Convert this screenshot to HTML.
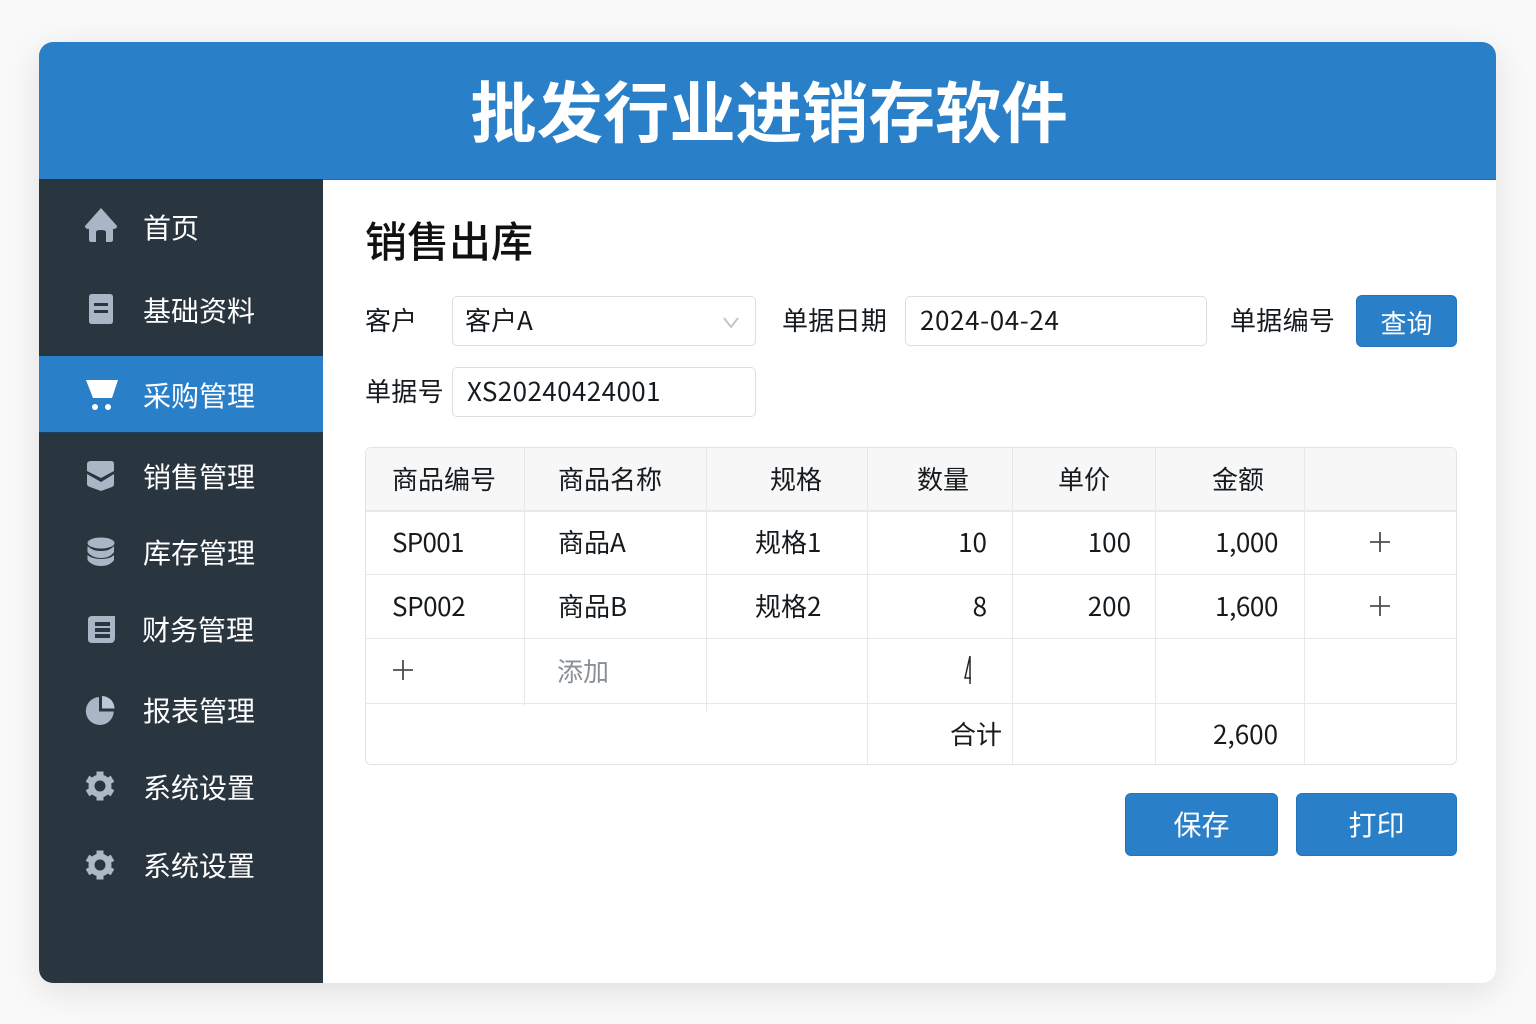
<!DOCTYPE html>
<html lang="zh-CN"><head><meta charset="utf-8"><title>批发行业进销存软件</title>
<style>
*{box-sizing:border-box;margin:0;padding:0}
html,body{width:1536px;height:1024px;overflow:hidden;background:#f9f9f9;font-family:"Liberation Sans","Noto Sans CJK SC",sans-serif}
body{position:relative}
.t{position:absolute;white-space:nowrap;font-family:"Noto Sans CJK SC",sans-serif;color:#151a1e;line-height:40px;height:40px}
.r{text-align:right}.c{text-align:center}
#card{position:absolute;left:39px;top:42px;width:1457px;height:941px;border-radius:14px;background:#fff;box-shadow:0 8px 34px rgba(0,0,0,.10);overflow:hidden}
#hd{position:absolute;left:0;top:0;width:1457px;height:138px;background:#2a7fc9;border-bottom:1px solid #1f6cb0}
#sb{position:absolute;left:0;top:137px;width:284px;height:804px;background:#29353f}
#ac{position:absolute;left:0;top:314px;width:284px;height:77px;background:#2a7fc9;border-bottom:1px solid #1c3f5f}
.n{font-size:28px;color:#fff;left:143px}
.box{position:absolute;background:#fff;border:1px solid #dcdfe2;border-radius:5px}
.btn{position:absolute;background:#2a7fc9;border:1px solid #2474bb;border-radius:6px}
.l{position:absolute;background:#e6e8ea}
svg{position:absolute;overflow:visible}
.f{font-size:26px}
</style></head><body>
<div id="card"><div id="hd"></div><div id="sb"></div><div id="ac"></div></div>

<div class="t" style="left:0;width:1538px;top:69px;height:80px;line-height:80px;font-size:66.400px;font-weight:700;color:#fff;text-align:center">批发行业进销存软件</div>

<svg style="left:0;top:0" width="1536" height="1024" viewBox="0 0 1536 1024">
<g fill="#a9b6c5">
<path d="M101 208 L117 226 Q117 229 113 229 L113 240 Q113 242 110 242 L106 242 L106 232 Q106 230 101 230 Q96 230 96 232 L96 242 L92 242 Q89 242 89 240 L89 229 Q85 229 85 226 Z"/>
<path fill-rule="evenodd" d="M92 294 H110 Q113 294 113 297 V321 Q113 324 110 324 H92 Q89 324 89 321 V297 Q89 294 92 294 Z M94 303 V306 H108 V303 Z M94 310 V313 H108 V310 Z"/>
<path d="M91 461 H111 Q114 461 114 464 V471 L101 478 L87 471 V464 Q87 461 91 461 Z"/>
<path d="M87 474 L101 482 L114 474 V484 Q114 486 112 487 L101 491 L90 487 Q87 486 87 484 Z"/>
<ellipse cx="101" cy="543" rx="13.500" ry="5.500"/>
<path d="M87.500 546 Q92 551 101 551 Q110 551 114 546 V552 Q110 558 101 558 Q92 558 87.500 552 Z"/>
<path d="M87.500 555 Q92 559 101 559 Q110 559 114 555 V560 Q110 566 101 566 Q92 566 87.500 560 Z"/>
<path fill-rule="evenodd" d="M92 616 H115 V638 Q115 643 110 643 H92 Q88 643 88 639 V620 Q88 616 92 616 Z M95 622 V626 H110 V622 Z M95 628 V632 H110 V628 Z M95 634 V638 H110 V634 Z"/>
<path d="M99 697 V711.500 H113.800 A14 14 0 1 1 99 697 Z"/>
<path d="M102 696 A12.500 12.500 0 0 1 114.500 708.500 H102 Z" fill="#bcc8d6"/>
</g>
<path d="M86 380 H118 L112 398 H93 Z" fill="#fff"/><circle cx="95" cy="407" r="3" fill="#fff"/><circle cx="108" cy="407" r="3" fill="#fff"/>
<g fill="none" stroke="#aeb9c6">
<circle cx="100" cy="786" r="8.500" stroke-width="6"/>
<path stroke-width="7" d="M100 771.500 V777 M100 795 V800.500 M87.500 778.750 L92.200 781.500 M107.800 790.500 L112.500 793.250 M87.500 793.250 L92.200 790.500 M107.800 781.500 L112.500 778.750"/>
<circle cx="100" cy="865" r="8.500" stroke-width="6"/>
<path stroke-width="7" d="M100 850.500 V856 M100 874 V879.500 M87.500 857.750 L92.200 860.500 M107.800 869.500 L112.500 872.250 M87.500 872.250 L92.200 869.500 M107.800 860.500 L112.500 857.750"/>
</g>
</svg>

<div class="t n" style="top:207px">首页</div>
<div class="t n" style="top:290px">基础资料</div>
<div class="t n" style="top:375px">采购管理</div>
<div class="t n" style="top:456px">销售管理</div>
<div class="t n" style="top:532px">库存管理</div>
<div class="t n" style="top:609px;left:142px">财务管理</div>
<div class="t n" style="top:690px">报表管理</div>
<div class="t n" style="top:767px">系统设置</div>
<div class="t n" style="top:845px">系统设置</div>

<div class="t" style="left:365px;top:218px;height:44px;line-height:44px;font-size:42px;font-weight:500;color:#111">销售出库</div>

<div class="t f" style="left:365px;top:300px">客户</div>
<div class="box" style="left:452px;top:296px;width:304px;height:50px"></div>
<div class="t f" style="left:465px;top:300px">客户A</div>
<svg style="left:0;top:0" width="1536" height="1024"><path d="M724 318 L731 327 L738 318" fill="none" stroke="#c4c7ca" stroke-width="2"/></svg>
<div class="t f" style="left:782px;top:300px;letter-spacing:.3px">单据日期</div>
<div class="box" style="left:905px;top:296px;width:302px;height:50px"></div>
<div class="t f" style="left:920px;top:300px;letter-spacing:.6px">2024-04-24</div>
<div class="t f" style="left:1230px;top:300px;letter-spacing:.3px">单据编号</div>
<div class="btn" style="left:1356px;top:295px;width:101px;height:52px"></div>
<div class="t f" style="left:1356px;width:101px;top:303px;color:#fff;text-align:center">查询</div>

<div class="t f" style="left:365px;top:371px;letter-spacing:.3px">单据号</div>
<div class="box" style="left:452px;top:367px;width:304px;height:50px"></div>
<div class="t f" style="left:467px;top:371px;letter-spacing:.4px">XS20240424001</div>

<div style="position:absolute;left:365px;top:447px;width:1092px;height:318px;border:1px solid #e1e3e5;border-radius:6px;overflow:hidden;background:#fff">
<div style="position:absolute;left:0;top:0;width:100%;height:62px;background:#f7f7f7"></div>
<div class="l" style="left:0;top:62px;width:100%;height:2px"></div>
<div class="l" style="left:0;top:126px;width:100%;height:1px"></div>
<div class="l" style="left:0;top:190px;width:100%;height:1px"></div>
<div class="l" style="left:0;top:255px;width:100%;height:1px"></div>
<div class="l" style="left:158px;top:0;width:1px;height:258px"></div>
<div class="l" style="left:340px;top:0;width:1px;height:263px"></div>
<div class="l" style="left:501px;top:0;width:1px;height:317px"></div>
<div class="l" style="left:646px;top:0;width:1px;height:317px"></div>
<div class="l" style="left:789px;top:0;width:1px;height:317px"></div>
<div class="l" style="left:938px;top:0;width:1px;height:317px"></div>
</div>

<div class="t f" style="left:392px;top:459px">商品编号</div>
<div class="t f" style="left:558px;top:459px">商品名称</div>
<div class="t f" style="left:770px;top:459px">规格</div>
<div class="t f" style="left:917px;top:459px">数量</div>
<div class="t f" style="left:1058px;top:459px">单价</div>
<div class="t f" style="left:1212px;top:459px">金额</div>

<div class="t f" style="left:392px;top:522px;letter-spacing:-.7px">SP001</div>
<div class="t f" style="left:558px;top:522px">商品A</div>
<div class="t f" style="left:755px;top:522px">规格1</div>
<div class="t f r" style="left:887px;width:100px;top:522px">10</div>
<div class="t f r" style="left:1031px;width:100px;top:522px">100</div>
<div class="t f r" style="left:1178px;width:100px;top:522px;letter-spacing:-.4px">1,000</div>

<div class="t f" style="left:392px;top:586px;letter-spacing:-.4px">SP002</div>
<div class="t f" style="left:558px;top:586px">商品B</div>
<div class="t f" style="left:755px;top:586px">规格2</div>
<div class="t f r" style="left:887px;width:100px;top:586px">8</div>
<div class="t f r" style="left:1031px;width:100px;top:586px">200</div>
<div class="t f r" style="left:1178px;width:100px;top:586px;letter-spacing:-.4px">1,600</div>

<div class="t f" style="left:557px;top:651px;color:#8b9094">添加</div>
<div class="t f" style="left:950px;top:714px">合计</div>
<div class="t f r" style="left:1178px;width:100px;top:714px">2,600</div>

<svg style="left:0;top:0" width="1536" height="1024">
<path d="M1370 542 H1390 M1380 532 V552 M1370 606 H1390 M1380 596 V616 M393 670 H413 M403 660 V680" stroke="#4a4f53" stroke-width="1.800" fill="none"/>
<path d="M970 656 L965 678 H971 M970 656 V684" stroke="#23282c" stroke-width="1.500" fill="none"/>
</svg>

<div class="btn" style="left:1125px;top:793px;width:153px;height:63px"></div>
<div class="t" style="left:1125px;width:153px;top:804px;font-size:28px;color:#fff;text-align:center">保存</div>
<div class="btn" style="left:1296px;top:793px;width:161px;height:63px"></div>
<div class="t" style="left:1296px;width:161px;top:804px;font-size:28px;color:#fff;text-align:center">打印</div>
</body></html>
